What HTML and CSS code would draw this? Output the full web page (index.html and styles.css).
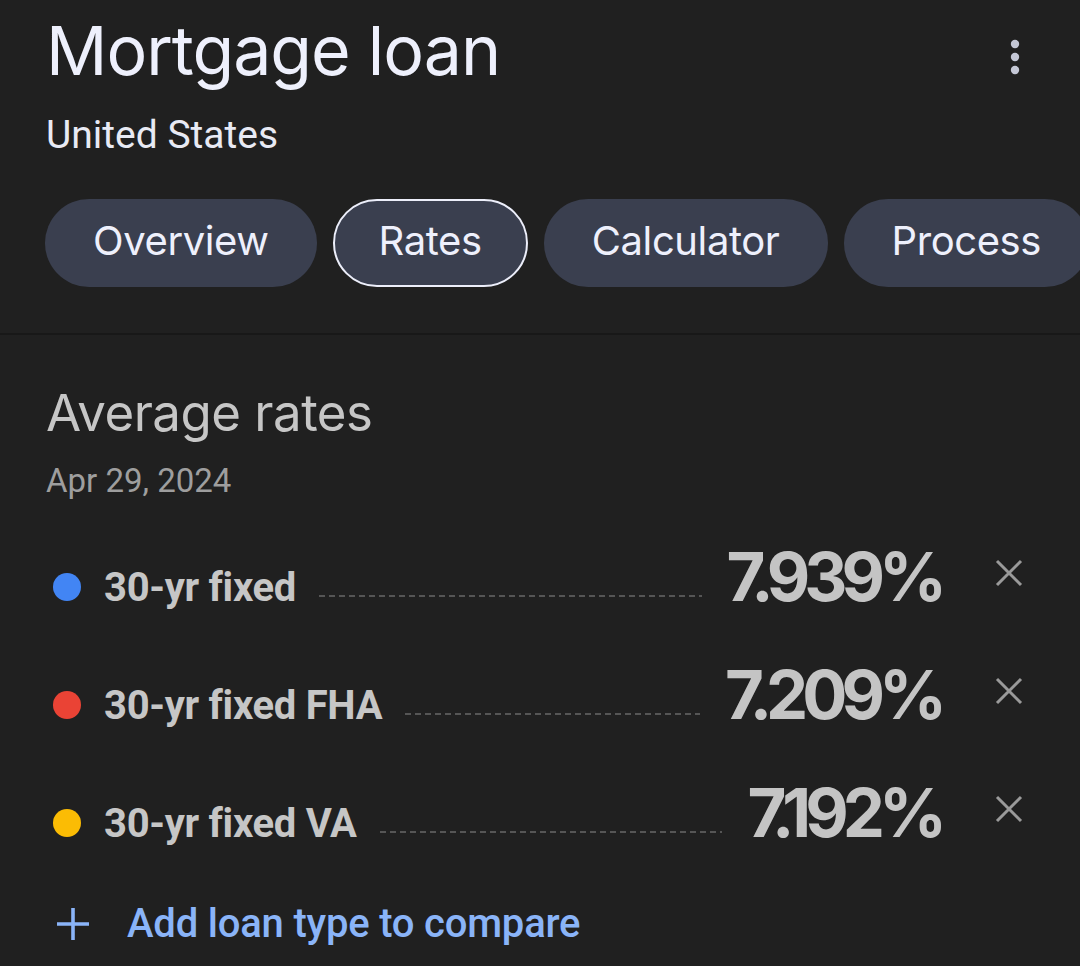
FILE: index.html
```html
<!DOCTYPE html>
<html lang="en">
<head>
<meta charset="utf-8">
<title>Mortgage loan</title>
<link rel="stylesheet" href="styles.css">
</head>
<body>
<header class="header">
  <div class="header-text">
    <h1 class="title">Mortgage loan</h1>
    <div class="subtitle">United States</div>
  </div>
  <button class="kebab" aria-label="More options">
    <svg width="12" height="36" viewBox="0 0 12 36"><circle cx="6" cy="5" r="4.2" fill="#c4c7d5"/><circle cx="6" cy="18" r="4.2" fill="#c4c7d5"/><circle cx="6" cy="31" r="4.2" fill="#c4c7d5"/></svg>
  </button>
</header>
<nav class="tabs">
  <div class="tab">Overview</div>
  <div class="tab tab-active">Rates</div>
  <div class="tab">Calculator</div>
  <div class="tab">Process</div>
</nav>
<div class="divider"></div>
<main class="section">
  <h2 class="section-title">Average rates</h2>
  <div class="date">Apr 29, 2024</div>
  <div class="rows">
    <div class="row">
      <span class="dot dot-blue"></span>
      <span class="label">30-yr fixed</span>
      <span class="leader"></span>
      <span class="rate">7.939%</span>
      <span class="close"><svg width="28" height="28" viewBox="0 0 28 28"><path d="M2 2L26 26M26 2L2 26" stroke="#9a9a9a" stroke-width="3"/></svg></span>
    </div>
    <div class="row">
      <span class="dot dot-red"></span>
      <span class="label">30-yr fixed FHA</span>
      <span class="leader"></span>
      <span class="rate">7.209%</span>
      <span class="close"><svg width="28" height="28" viewBox="0 0 28 28"><path d="M2 2L26 26M26 2L2 26" stroke="#9a9a9a" stroke-width="3"/></svg></span>
    </div>
    <div class="row">
      <span class="dot dot-yellow"></span>
      <span class="label">30-yr fixed VA</span>
      <span class="leader"></span>
      <span class="rate">7.192%</span>
      <span class="close"><svg width="28" height="28" viewBox="0 0 28 28"><path d="M2 2L26 26M26 2L2 26" stroke="#9a9a9a" stroke-width="3"/></svg></span>
    </div>
  </div>
  <div class="add">
    <svg class="plus" width="34" height="34" viewBox="0 0 34 34"><path d="M17 1V33M1 17H33" stroke="#8ab4f8" stroke-width="3.6"/></svg>
    <span class="add-text">Add loan type to compare</span>
  </div>
</main>
</body>
</html>
```
FILE: styles.css
```css
html, body {
  margin: 0;
  padding: 0;
  background: #202020;
}
body {
  width: 1080px;
  height: 966px;
  overflow: hidden;
  font-family: Roboto, "Liberation Sans", sans-serif;
}
.header {
  display: flex;
  justify-content: space-between;
  align-items: flex-start;
  padding: 0 41px 0 46px;
}
.title {
  margin: 0;
  padding-top: 8px;
  font-family: Inter, Roboto, sans-serif;
  font-weight: 400;
  font-size: 68px;
  line-height: 84px;
  letter-spacing: -1px;
  color: #eef0fc;
}
.subtitle {
  margin-top: 20px;
  font-size: 39px;
  line-height: 46px;
  color: #e8eaf4;
}
.kebab {
  margin-top: 39px;
  width: 48px;
  height: 36px;
  background: none;
  border: 0;
  padding: 0;
  display: flex;
  justify-content: center;
}
.tabs {
  display: flex;
  gap: 16px;
  padding-left: 45px;
  margin-top: 41px;
  overflow: hidden;
  white-space: nowrap;
}
.tab {
  flex: none;
  box-sizing: border-box;
  height: 88px;
  padding: 0 48px;
  border-radius: 44px;
  background: #3a3f4f;
  color: #eef0fc;
  font-family: Inter, Roboto, sans-serif;
  font-size: 40px;
  line-height: 84px;
  letter-spacing: -0.4px;
}
.tab-active {
  border: 2px solid #eceefa;
  line-height: 80px;
  padding: 0 44px;
}
.divider {
  margin-top: 46px;
  height: 2px;
  background: #181818;
}
.section {
  padding: 0 46px;
}
.section-title {
  margin: 0;
  padding-top: 48px;
  font-family: Inter, Roboto, sans-serif;
  font-weight: 400;
  font-size: 51px;
  line-height: 60px;
  letter-spacing: -0.5px;
  color: #c6c6c6;
}
.date {
  margin-top: 18px;
  font-size: 33px;
  line-height: 40px;
  color: #9e9e9e;
}
.rows {
  margin-top: 35px;
  padding-left: 7px;
  padding-right: 11px;
}
.row {
  display: flex;
  align-items: baseline;
  height: 118px;
}
.dot {
  flex: none;
  width: 28px;
  height: 28px;
  border-radius: 50%;
  margin-right: 23px;
}
.dot-blue { background: #4285f4; }
.dot-red { background: #ea4335; }
.dot-yellow { background: #fbbc04; }
.label {
  flex: none;
  font-weight: 700;
  font-size: 40px;
  letter-spacing: -0.3px;
  color: #c6c6c6;
}
.leader {
  flex: 1;
  height: 6px;
  margin: 0 25px 0 23px;
  background-image: repeating-linear-gradient(to right, #555 0 6px, transparent 6px 10px);
  background-size: 100% 2px;
  background-repeat: no-repeat;
  background-position: left top;
}
.rate {
  flex: none;
  font-family: Inter, Roboto, sans-serif;
  font-weight: 700;
  font-size: 67px;
  letter-spacing: -6px;
  color: #c4c4c4;
}
.close {
  flex: none;
  width: 28px;
  height: 28px;
  padding-bottom: 14px;
  margin-left: 54px;
}
.close svg { display: block; }
.add {
  display: flex;
  align-items: center;
  gap: 37px;
  padding-left: 10px;
  margin-top: 10px;
}
.plus { flex: none; display: block; }
.add-text {
  font-weight: 500;
  font-size: 40px;
  letter-spacing: -0.2px;
  color: #8ab4f8;
}
```
